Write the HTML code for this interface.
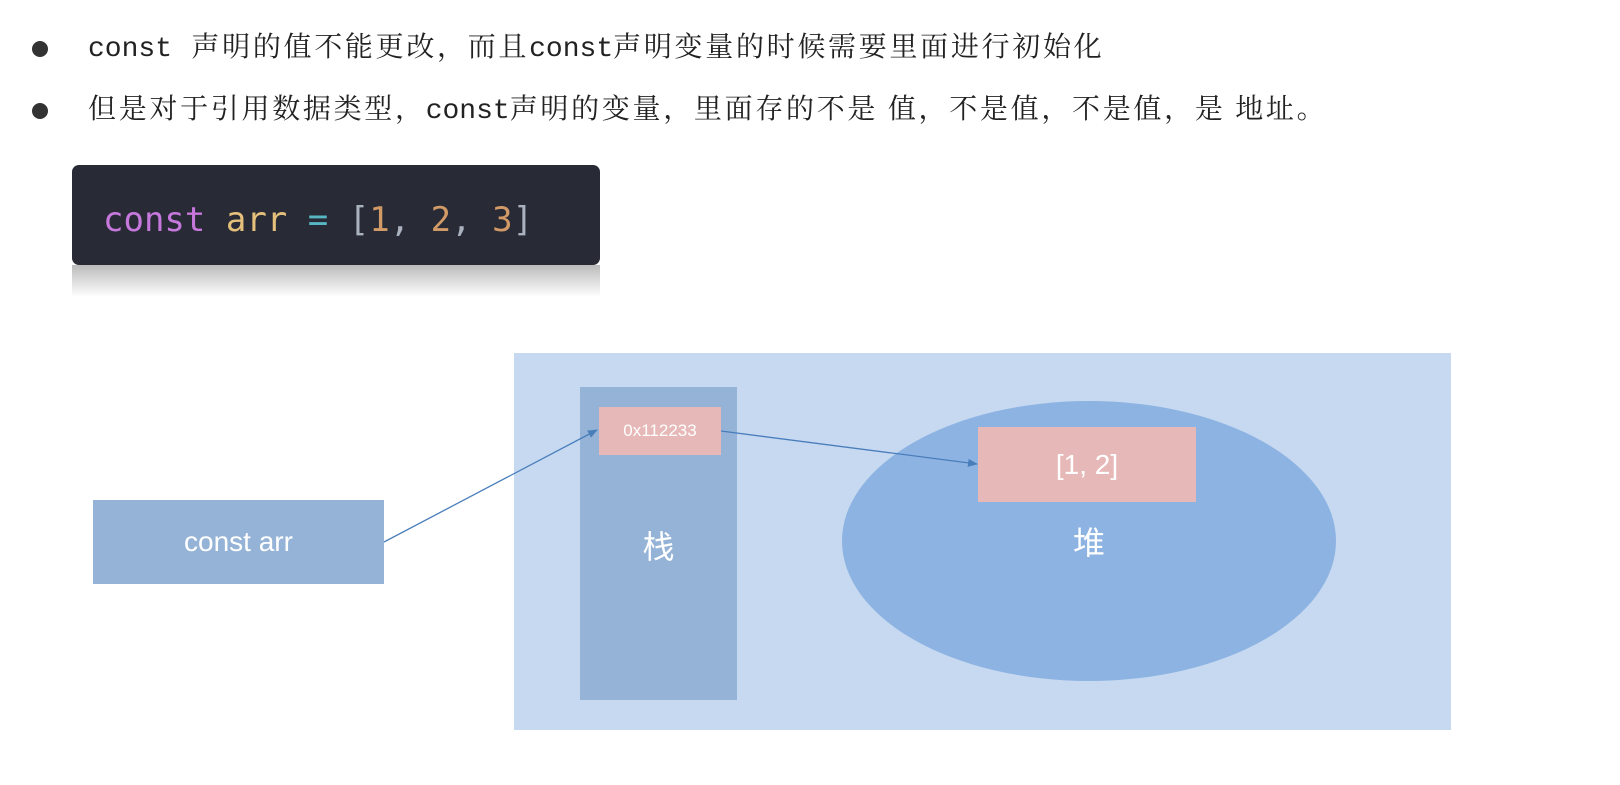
<!DOCTYPE html>
<html><head><meta charset="utf-8"><style>
body{margin:0;width:1620px;height:785px;background:#fff;position:relative;overflow:hidden;font-family:"Liberation Serif","Noto Serif CJK SC",serif}
.l{position:absolute;left:88px;font-size:28px;letter-spacing:2.7px;color:#222;white-space:nowrap;line-height:30px}
.m{font-family:"Liberation Mono",monospace;letter-spacing:0}
.dot{position:absolute;left:32px;width:16px;height:16px;border-radius:50%;background:#333}
.a{position:absolute}
.w{color:#fff;font-family:"Liberation Sans","Noto Sans CJK SC",sans-serif;display:flex;align-items:center;justify-content:center}
</style></head><body>
<div class="dot" style="top:41px"></div>
<div class="l" style="top:33px"><span class="m">const</span>&nbsp;&nbsp;声明的值不能更改，而且<span class="m">const</span>声明变量的时候需要里面进行初始化</div>
<div class="dot" style="top:103px"></div>
<div class="l" style="top:95px">但是对于引用数据类型，<span class="m">const</span>声明的变量，里面存的不是 值，不是值，不是值，是 地址。</div>
<div class="a" style="left:72px;top:265px;width:528px;height:32px;background:linear-gradient(#bbb,#fff)"></div>
<div class="a" style="left:72px;top:165px;width:528px;height:100px;background:#282a36;border-radius:7px"></div>
<div class="a" style="left:103px;top:196px;font:34px 'DejaVu Sans Mono',monospace;line-height:48px;white-space:pre"><span style="color:#c678dd">const</span> <span style="color:#e5c07b">arr</span> <span style="color:#56b6c2">=</span> <span style="color:#abb2bf">[</span><span style="color:#d19a66">1</span><span style="color:#abb2bf">, </span><span style="color:#d19a66">2</span><span style="color:#abb2bf">, </span><span style="color:#d19a66">3</span><span style="color:#abb2bf">]</span></div>
<div class="a" style="left:514px;top:353px;width:937px;height:377px;background:#c6d9f1"></div>
<div class="a w" style="left:580px;top:387px;width:157px;height:313px;background:#95b3d7;font-size:32px;align-items:flex-start;padding-top:135px;box-sizing:border-box">栈</div>
<div class="a w" style="left:599px;top:407px;width:122px;height:48px;background:#e6b9b8;font-size:17px">0x112233</div>
<div class="a w" style="left:93px;top:500px;width:291px;height:84px;background:#95b3d7;font-size:28px">const arr</div>
<div class="a w" style="left:842px;top:401px;width:494px;height:280px;border-radius:50%;background:#8db3e2;font-size:32px">堆</div>
<div class="a w" style="left:978px;top:427px;width:218px;height:75px;background:#e6b9b8;font-size:28px">[1, 2]</div>
<svg class="a" style="left:0;top:0" width="1620" height="785"><defs><marker id="ar" markerWidth="10" markerHeight="8" refX="9" refY="4" orient="auto" markerUnits="userSpaceOnUse"><path d="M0 0L10 4L0 8z" fill="#4a7ebb"/></marker></defs>
<line x1="384" y1="542" x2="597" y2="430" stroke="#4a7ebb" stroke-width="1.3" marker-end="url(#ar)"/>
<line x1="721" y1="431" x2="977" y2="464" stroke="#4a7ebb" stroke-width="1.3" marker-end="url(#ar)"/>
</svg>
</body></html>
